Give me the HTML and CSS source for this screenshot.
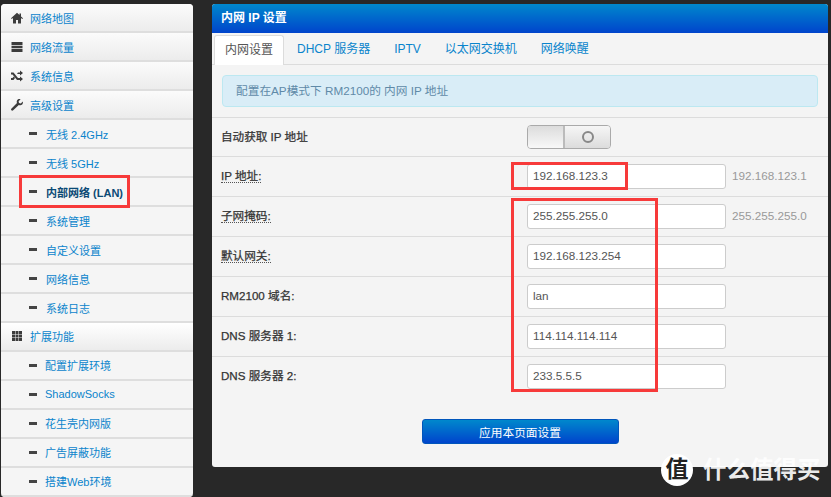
FILE: index.html

```html
<!DOCTYPE html>
<html lang="zh-CN">
<head>
  <meta charset="UTF-8" />
  <title>内网 IP 设置</title>
  <link rel="stylesheet" href="styles.css">
</head>
<body>

<div class="sidebar">
  <a class="nav-top">
    <svg class="ico" viewBox="0 0 12 12"><path d="M6 .8 0 6.200l.7.8L2 5.900V11.500h3V8h2v3.500h3V5.900L11.300 7l.7-.8L10 4.400V1.500H8.500v1.600z"/></svg>网络地图</a>
  <a class="nav-top">
    <svg class="ico" viewBox="0 0 12 12"><path d="M.5 1h11v3H.5zM.5 4.700h11v2.600H.5zM.5 8h11v3H.5z"/></svg>网络流量</a>
  <a class="nav-top">
    <svg class="ico" viewBox="0 0 12 12"><path d="M0 2.500h2.500L7 8h2V6.500L12 9 9 11.500V10H6L1.500 4.500H0zM0 8h1.500l1.300-1.500L4 8 2.500 10H0zM6 4 7 2.500h2V.5L12 3 9 5.500V4z"/></svg>系统信息</a>
  <a class="nav-top">
    <svg class="ico" viewBox="0 0 12 12"><path d="M11.800 2.500 9.800 4.400 8 4 7.600 2.200 9.600.3C8 -.3 6.400.3 5.900 1.700c-.3.900-.2 1.700.1 2.300L.5 9.500c-.6.600-.6 1.300-.1 1.800s1.200.5 1.800-.1L7.800 6c.7.300 1.500.4 2.300.1 1.400-.5 2.200-2 1.700-3.600z"/></svg>高级设置</a>
  <a class="nav-sub"><span class="dash"></span>无线 2.4GHz</a>
  <a class="nav-sub"><span class="dash"></span>无线 5GHz</a>
  <a class="nav-sub current"><span class="dash"></span>内部网络 (LAN)</a>
  <a class="nav-sub"><span class="dash"></span>系统管理</a>
  <a class="nav-sub"><span class="dash"></span>自定义设置</a>
  <a class="nav-sub"><span class="dash"></span>网络信息</a>
  <a class="nav-sub"><span class="dash"></span>系统日志</a>
  <a class="nav-top open">
    <svg class="ico" viewBox="0 0 12 12"><path d="M1 1h3v3H1zM4.500 1h3v3h-3zM8 1h3v3H8zM1 4.500h3v3H1zM4.500 4.500h3v3h-3zM8 4.500h3v3H8zM1 8h3v3H1zM4.500 8h3v3h-3zM8 8h3v3H8z"/></svg>扩展功能</a>
  <a class="nav-sub ext"><span class="dash"></span>配置扩展环境</a>
  <a class="nav-sub ext"><span class="dash"></span>ShadowSocks</a>
  <a class="nav-sub ext"><span class="dash"></span>花生壳内网版</a>
  <a class="nav-sub ext"><span class="dash"></span>广告屏蔽功能</a>
  <a class="nav-sub ext"><span class="dash"></span>搭建Web环境</a>
</div>

<div class="panel">
  <div class="panel-head">内网 IP 设置</div>
  <div class="tabs">
    <a class="tab active">内网设置</a>
    <a class="tab">DHCP 服务器</a>
    <a class="tab">IPTV</a>
    <a class="tab">以太网交换机</a>
    <a class="tab">网络唤醒</a>
  </div>
  <div class="alert">配置在AP模式下 RM2100的 内网 IP 地址</div>

  <div class="row first">
    <div class="label">自动获取 IP 地址</div>
    <div class="toggle"><span class="toggle-off"></span><span class="toggle-on"><i class="ring"></i></span></div>
  </div>
  <div class="row">
    <div class="label"><span class="tip">IP 地址:</span></div>
    <input class="field" type="text" value="192.168.123.3" />
    <span class="hint">192.168.123.1</span>
  </div>
  <div class="row">
    <div class="label"><span class="tip">子网掩码:</span></div>
    <input class="field" type="text" value="255.255.255.0" />
    <span class="hint">255.255.255.0</span>
  </div>
  <div class="row">
    <div class="label"><span class="tip">默认网关:</span></div>
    <input class="field" type="text" value="192.168.123.254" />
  </div>
  <div class="row">
    <div class="label">RM2100 域名:</div>
    <input class="field" type="text" value="lan" />
  </div>
  <div class="row">
    <div class="label">DNS 服务器 1:</div>
    <input class="field" type="text" value="114.114.114.114" />
  </div>
  <div class="row">
    <div class="label">DNS 服务器 2:</div>
    <input class="field" type="text" value="233.5.5.5" />
  </div>

  <div class="actions"><button class="btn-apply">应用本页面设置</button></div>
</div>

<!-- annotations drawn on top of the screenshot -->
<div class="mark mark-lan"></div>
<div class="mark mark-ip"></div>
<div class="mark mark-rest"></div>

<div class="watermark">
  <span class="wm-logo">值</span>
  <span class="wm-text">什么值得买</span>
</div>

</body>
</html>
```

FILE: styles.css

```css
html, body {
  height: 100%;
}
body {
  margin: 0;
  padding: 4px 3px 0 1px;
  box-sizing: border-box;
  height: 497px;
  overflow: hidden;
  display: flex;
  align-items: flex-start;
  background-color: #282828;
  font-family: "Liberation Sans", "Noto Sans CJK SC", sans-serif;
  color: #333;
}
.sidebar {
  width: 192px;
  margin-right: 19px;
  flex: none;
  background-color: #f5f5f5;
  border-radius: 4px;
  overflow: hidden;
  font-size: 11px;
}
.nav-top, .nav-sub {
  display: flex;
  align-items: center;
  box-sizing: border-box;
  height: 29px;
  color: #0a84cc;
  border-bottom: 2px solid #dedede;
}
.nav-top {
  padding-left: 10px;
  background: linear-gradient(#fbfbfb, #ececec);
}
.nav-top.open {
  padding-bottom: 1px;
  background: linear-gradient(#ffffff, #ececec);
}
.ico {
  width: 12px;
  height: 12px;
  margin-right: 7px;
  fill: #3c3c3c;
  flex: none;
}
.nav-sub {
  padding-left: 28px;
}
.nav-sub.ext {
  padding-bottom: 1px;
}
.nav-sub.ext .dash {
  margin-right: 8px;
}
.dash {
  width: 8px;
  height: 3px;
  margin-right: 9px;
  background-color: #444;
  flex: none;
}
.nav-sub.current {
  color: #0b4a75;
  font-weight: bold;
}
.panel {
  width: 616px;
  height: 463px;
  flex: none;
  background-color: #f4f4f4;
  border-radius: 3px;
  overflow: hidden;
  font-size: 11.7px;
}
.panel-head {
  height: 29px;
  line-height: 28px;
  padding-left: 9px;
  box-sizing: border-box;
  color: #fff;
  font-weight: bold;
  font-size: 12px;
  background: linear-gradient(#0088cc, #0044cc);
}
.tabs {
  display: flex;
  height: 32px;
  padding: 2px 0 0 2px;
  box-sizing: border-box;
  border-bottom: 1px solid #dcdcdc;
  font-size: 12px;
}
.tab {
  padding: 0 11px;
  margin-right: 2px;
  height: 30px;
  line-height: 28px;
  box-sizing: border-box;
  color: #0a84cc;
}
.tab.active {
  color: #555;
  background-color: #fff;
  border: 1px solid #dcdcdc;
  border-bottom: none;
  border-radius: 3px 3px 0 0;
  padding: 0 10px;
}
.alert {
  margin: 10px 10px 10px;
  height: 32px;
  line-height: 29px;
  padding-left: 13px;
  box-sizing: border-box;
  color: #5f8aa8;
  background-color: #d9edf7;
  border: 1px solid #bce8f1;
  border-radius: 4px;
}
.row {
  display: flex;
  align-items: center;
  height: 40px;
  box-sizing: border-box;
  border-top: 1px solid #dcdcdc;
}
.row.first {
  height: 39px;
}
.label {
  width: 315px;
  padding: 0 0 3px 9px;
  flex: none;
  box-sizing: border-box;
  font-size: 11.6px;
  -webkit-text-stroke: 0.25px #333;
}
.tip {
  border-bottom: 1px dotted #555;
}
.toggle {
  display: flex;
  width: 84px;
  height: 24px;
  box-sizing: border-box;
  border: 1px solid #aaa;
  border-radius: 4px;
  overflow: hidden;
}
.toggle-off {
  width: 35px;
  background: linear-gradient(#dcdcdc, #f8f8f8);
  border-right: 2px solid #bbb;
}
.toggle-on {
  flex: 1;
  display: flex;
  align-items: center;
  justify-content: center;
  background: linear-gradient(#f6f6f6, #dcdcdc);
}
.ring {
  width: 12px;
  height: 12px;
  box-sizing: border-box;
  border: 2px solid #888;
  border-radius: 50%;
}
.field {
  width: 199px;
  height: 25px;
  padding: 0 5px 2px;
  box-sizing: border-box;
  background-color: #fff;
  border: 1px solid #ccc;
  border-radius: 3px;
  font-family: inherit;
  font-size: 11.7px;
  color: #555;
}
.hint {
  margin-left: 6px;
  padding-bottom: 2px;
  color: #999;
  font-size: 11.7px;
}
.actions {
  display: flex;
  justify-content: center;
  margin-top: 23px;
}
.btn-apply {
  width: 197px;
  height: 25px;
  padding: 0;
  border: 1px solid #0055bb;
  border-radius: 3px;
  color: #fff;
  font-family: inherit;
  font-size: 11.7px;
  background: linear-gradient(#0088cc, #0044cc);
}
.mark {
  position: absolute;
  box-sizing: border-box;
  border: 3px solid #f73a3a;
}
.mark-lan {
  left: 19px;
  top: 175px;
  width: 111px;
  height: 33px;
}
.mark-ip {
  left: 511px;
  top: 162px;
  width: 117px;
  height: 28px;
}
.mark-rest {
  left: 511px;
  top: 198px;
  width: 147px;
  height: 194px;
}
.watermark {
  position: absolute;
  left: 661px;
  top: 454px;
  display: flex;
  align-items: center;
}
.wm-logo {
  width: 32px;
  height: 32px;
  margin-right: 10px;
  line-height: 31px;
  text-align: center;
  border-radius: 50%;
  background-color: #fff;
  color: #222;
  font-size: 23px;
  font-weight: bold;
}
.wm-text {
  color: rgba(255, 255, 255, 0.92);
  font-size: 23.5px;
  font-weight: bold;
  line-height: 32px;
}
```
